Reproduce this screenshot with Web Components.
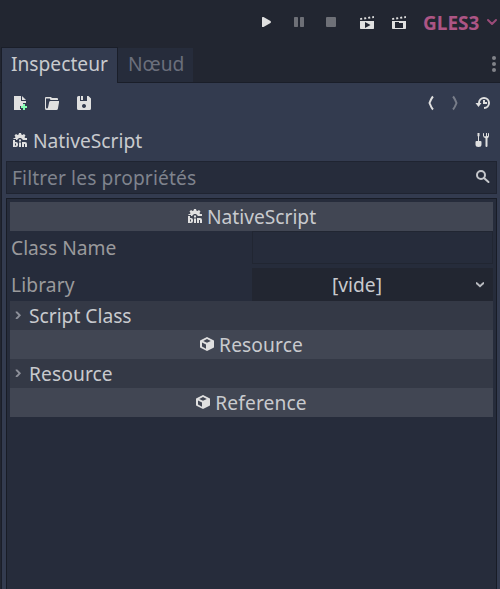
<!DOCTYPE html>
<html lang="fr">
<head>
<meta charset="utf-8">
<title>Inspecteur</title>
<style>
  html, body { margin: 0; height: 100%; overflow: hidden; background: #202531; }
  body { font: 19.2px/29px "Noto Sans", sans-serif; color: #c8cace; }
</style>
</head>
<body>
<editor-app></editor-app>
<script>
const ICONS = {
  play: '<path d="M4 3.5Q4 3 4.5 3H5.5L12.5 7Q13.6 8 12.5 9L5.5 13H4.5Q4 13 4 12.5Z"/>',
  pause: '<rect x="4" y="3" width="4" height="10" rx=".7"/><rect x="10" y="3" width="4" height="10" rx=".7"/>',
  stop: '<rect x="4" y="3" width="10" height="10" rx="1"/>',
  clapplay: '<path d="M1 3.2l2-.4.4 1.800-2 .4zM5 2.600l2-.3.4 1.700-2 .4zM9 2l2-.4.4 1.800-2 .3zM13 1.400l1.900-.4.1 2-1.600.3z"/><path fill-rule="evenodd" d="M1 6h14v7.400l-.6.600H1.600L1 13.400zM6 7v6l5.500-3z"/>',
  clapopen: '<path d="M1 3.2l2-.4.4 1.800-2 .4zM5 2.600l2-.3.4 1.700-2 .4zM9 2l2-.4.4 1.800-2 .3zM13 1.400l1.900-.4.1 2-1.600.3z"/><path fill-rule="evenodd" d="M1 6h14v7.400l-.6.600H1.600L1 13.400zM4 7v6h8V8H8V7z"/>',
  chevron: '<path fill="none" stroke="currentColor" stroke-width="2" stroke-linecap="round" stroke-linejoin="round" d="M4 6l4 4 4-4"/>',
  dots: '<circle cx="8" cy="2" r="2"/><circle cx="8" cy="8" r="2"/><circle cx="8" cy="14" r="2"/>',
  create: '<path d="M2 1h7v5h5v2h-3v3H8v3h1v1H2z"/><path d="M10 1l4 4h-4z"/><path fill="#84ffb1" d="M11 9h2v2h2v2h-2v2h-2v-2H9v-2h2z"/>',
  open: '<path fill-rule="evenodd" d="M2 2Q1 2 1 3V13.5Q1 15 2.5 15H12.5Q13.6 15 13.9 13.8L15 7.5V6H6.5Q5.4 6 5.2 7L4 12.5Q3.8 13.4 3 13.4Q2 13.4 2 12.4V3.5H6V4Q6 5 7 5H14V4Q14 3 13 3H8.5Q7.5 3 7 2Z"/>',
  save: '<path fill-rule="evenodd" d="M2.5 1H4v5h7V1h1.500L15 3.500v10q0 1.500-1.500 1.500h-11Q1 15 1 13.500v-11Q1 1 2.500 1zM8 9a2 2 0 1 0 .01 0z"/><path d="M5 1h2v4H5z"/>',
  back: '<path fill="none" stroke="currentColor" stroke-width="2" d="M10 1.500Q8.500 3 6.500 8Q8.500 13 10 14.500"/>',
  forward: '<path fill="none" stroke="currentColor" stroke-width="2" d="M6 1.500Q7.500 3 9.500 8Q7.500 13 6 14.500"/>',
  history: '<path fill="none" stroke="currentColor" stroke-width="2" d="M4 8.500V8a5 5 0 1 1 5 5"/><path d="M.5 8h6L3.500 12zM8 5h2v2h2v2H8z"/>',
  tools: '<path d="M2.500 1h2v3l-.5.500V9h1.500q1 0 1 1v2.500q0 2.500-3 2.500t-3-2.500V10q0-1 1-1H3V4.500L2.500 4zM8 1.500q0-.5 1-.5v3q1 .8 2 0V1h1v3q1 0 1-.5V1q1 0 1 .5v2q0 2-1.500 2.800V14q0 1-1 1t-1-1V6.300Q8 5.500 8 3.500z"/>',
  native: '<path fill-rule="evenodd" d="M7 1h2l.4 1.600 1 .4L12 2l1.500 1.500-1 1.500.5 1h2v2h-4.500V7H9.500V6h-3v1H5.500v1H4V7H1.500V6H3l.5-1-1-1.500L4 2l1.600 1 1-.4z"/><path fill-rule="evenodd" d="M1 8h2v2h1q2 0 2 2v1q0 2-2 2H1zM3 11.500v2h1v-2zM7 10.500h2V15H7zM7 7.500h2v2H7zM10 10h3q2 0 2 2v3h-2v-3h-1v3h-2z"/>',
  search: '<circle cx="6" cy="6" r="4" fill="none" stroke="currentColor" stroke-width="2"/><path fill="none" stroke="currentColor" stroke-width="2" stroke-linecap="round" d="M9 9l4.500 4"/>',
  arrow: '<path fill="none" stroke="currentColor" stroke-width="2" d="M4 6q1 0 1.500 1L8 9.200 10.500 7q.5-1 1.500-1"/>',
  fold: '<path fill="none" stroke="currentColor" stroke-width="1.900" d="M6.500 3.500q0 1 1 1.500l2.200 2.300L7.500 9.600q-1 .5-1 1.500"/>',
  cube: '<path fill-rule="evenodd" d="M8 1l6.500 3.200Q15 4.500 15 5v6q0 .5-.5.800L8 15l-6.500-3.200Q1 11.500 1 11V5q0-.5.500-.800zM8 3L4.200 5 8 6.800 11.800 5zM3 6.500v4l4 2.200V8.600z"/>'
};

function define(name, css, html) {
  const template = document.createElement('template');
  template.innerHTML = `<style>${css}</style>${html}`;
  customElements.define(name, class extends HTMLElement {
    constructor() {
      super();
      this.attachShadow({ mode: 'open' }).append(template.content.cloneNode(true));
    }
  });
}

customElements.define('ui-icon', class extends HTMLElement {
  connectedCallback() {
    if (this.shadowRoot) return;
    this.attachShadow({ mode: 'open' }).innerHTML =
      `<style>:host{display:block;flex:none;width:16px;height:16px;color:#e0e0e0}
       svg{display:block}</style>
       <svg width="16" height="16" viewBox="0 0 16 16" fill="currentColor">${ICONS[this.getAttribute('name')]}</svg>`;
  }
});

define('run-bar', `
  :host { display: flex; align-items: center; height: 47px; padding: 0 0 3px 258px; box-sizing: border-box; }
  .icons { display: flex; gap: 16px; }
  .off { opacity: .4; }
  .clap { margin-left: 5px; }
  .clap, .clap + ui-icon { padding-top: 1px; margin-bottom: -1px; }
  .driver { margin-left: 16px; padding-top: 2px; font-weight: bold; font-size: 19px; color: #ad5585; width: 61px; white-space: nowrap; }
  .drop { color: #9b4b78; }
`, `<div class="icons"><ui-icon name="play"></ui-icon><ui-icon class="off" name="pause"></ui-icon><ui-icon class="off" name="stop"></ui-icon>
  <ui-icon class="clap" name="clapplay"></ui-icon><ui-icon name="clapopen"></ui-icon></div>
  <span class="driver">GLES3</span><ui-icon class="drop" name="chevron"></ui-icon>`);

define('dock-tab', `
  :host { display: block; box-sizing: border-box; height: 35px; padding: 1px 10px 0; white-space: nowrap; border-bottom: 1px solid #1a1e29; background: #262c3b; color: #6b6f7b; }
  :host([active]) { height: 36px; padding: 1px 9px 0; background: #333b4f; color: #c8cace; border: 1px solid #1a1e29; border-bottom: 0; }
`, `<slot></slot>`);

define('dock-tabs', `
  :host { display: flex; height: 36px; padding-left: 1px; align-items: flex-end; background: linear-gradient(#1a1e29,#1a1e29) 0 100% / 100% 1px no-repeat; }
  .first { width: 117px; box-sizing: border-box; }
  .second { width: 75px; }
  .menu { margin: 0 -2px 11px auto; opacity: .5; }
`, `<dock-tab class="first" active>Inspecteur</dock-tab><dock-tab class="second">Nœud</dock-tab><ui-icon class="menu" name="dots"></ui-icon>`);

define('icon-bar', `
  :host { display: flex; height: 16px; padding: 12px 9px 0 10px; gap: 16px; }
  .push { margin-left: auto; }
  .off { opacity: .4; }
  .near { margin-right: -8px; }
  .hist { margin-left: 4px; }
`, `<ui-icon name="create"></ui-icon><ui-icon name="open"></ui-icon><ui-icon name="save"></ui-icon>
<ui-icon class="push near" name="back"></ui-icon><ui-icon class="off near" name="forward"></ui-icon><ui-icon class="hist" name="history"></ui-icon>`);

define('object-title', `
  :host { display: flex; align-items: center; height: 29px; padding: 15px 9px 0 10px; }
  span { margin-left: 5px; flex: 1; }
  ui-icon { margin-bottom: 1px; }
`, `<ui-icon name="native"></ui-icon><span><slot></slot></span><ui-icon name="tools"></ui-icon>`);

define('search-field', `
  :host { display: flex; align-items: center; box-sizing: border-box; height: 33px; margin: 6px 3px 0 4px; padding: 0 5px; border: 1px solid #1f2431; background: #262c3b; color: #7f838d; letter-spacing: .13px; }
  span { flex: 1; }
  ui-icon { color: #c5c7cb; margin-bottom: 2px; }
`, `<span><slot></slot></span><ui-icon name="search"></ui-icon>`);

define('category-row', `
  :host { display: flex; align-items: center; justify-content: center; gap: 4px; height: 29px; background: #414653; }
  :host([wide]) { letter-spacing: .1px; padding-right: 1px; }
  ::slotted(ui-icon) { margin-bottom: 1px; }
`, `<slot name="icon"></slot><span><slot></slot></span>`);

define('section-row', `
  :host { display: flex; align-items: center; height: 29px; gap: 3px; background: #343946; }
  :host([wide]) { letter-spacing: .1px; }
  ui-icon { color: #8d9099; }
`, `<ui-icon name="fold"></ui-icon><span><slot></slot></span>`);

define('property-row', `
  :host { display: grid; grid-template-columns: 242px 1fr; height: 33px; line-height: 33px; color: #9a9a9c; }
  .label { padding-left: 1px; }
  :host([wide]) .label { letter-spacing: .12px; }
`, `<span class="label"><slot></slot></span><slot name="value"></slot>`);

define('text-value', `
  :host { display: block; box-sizing: border-box; border: 1px solid #212632; background: #262c3b; }
`, ``);

define('option-value', `
  :host { display: flex; align-items: center; padding: 0 5px 0 0; background: #222631; color: #c8cace; }
  span { flex: 1; text-align: center; padding-right: 10px; }
  ui-icon { color: #b9bbc0; }
`, `<span><slot></slot></span><ui-icon name="arrow"></ui-icon>`);

define('property-list', `
  :host { display: block; flex: 1; box-sizing: border-box; margin: 4px 3px 0 4px; padding: 3px; border: 1px solid #181c26; border-bottom: 0; background: #262c3b; }
  .gap { margin-bottom: 4px; }
`, `<category-row><ui-icon slot="icon" name="native"></ui-icon>NativeScript</category-row>
<property-row class="gap">Class Name<text-value slot="value"></text-value></property-row>
<property-row wide>Library<option-value slot="value">[vide]</option-value></property-row>
<section-row>Script Class</section-row>
<category-row wide><ui-icon slot="icon" name="cube"></ui-icon>Resource</category-row>
<section-row wide>Resource</section-row>
<category-row wide><ui-icon slot="icon" name="cube"></ui-icon>Reference</category-row>`);

define('inspector-dock', `
  :host { display: flex; flex-direction: column; flex: 1; margin-left: 1px; border-left: 1px solid #1a1e29; background: #333b4f; }
`, `<icon-bar></icon-bar><object-title>NativeScript</object-title><search-field>Filtrer les propriétés</search-field><property-list></property-list>`);

define('editor-app', `
  :host { display: flex; flex-direction: column; width: 500px; height: 589px; overflow: hidden; background: #222631; }
`, `<run-bar></run-bar><dock-tabs></dock-tabs><inspector-dock></inspector-dock>`);
</script>
</body>
</html>
